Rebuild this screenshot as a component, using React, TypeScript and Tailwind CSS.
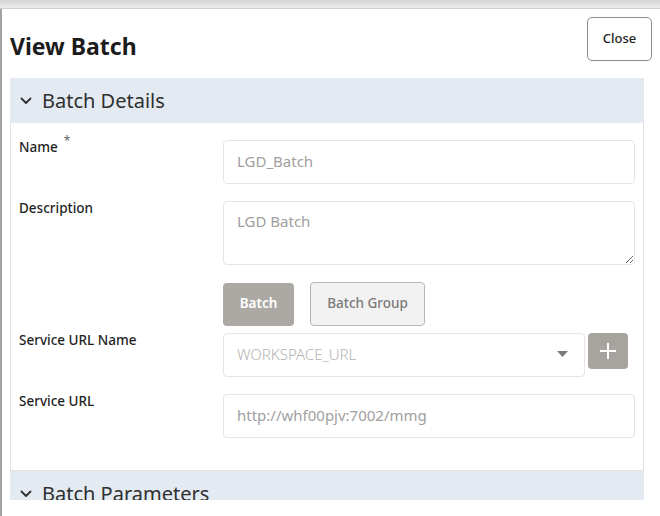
import React from "react"

const Chevron = () => (
  <svg width="12" height="8" viewBox="0 0 12 8" className="shrink-0">
    <polyline points="1.5,1.5 6,6 10.5,1.5" fill="none" stroke="#333" strokeWidth="1.8" strokeLinecap="round" strokeLinejoin="round" />
  </svg>
)

const SectionHeader = ({ title }: { title: string }) => (
  <div className="h-[45px] shrink-0 bg-[#e4eaf1] flex items-center pl-[9px] gap-[10px] border-x border-[#e4eaf1]">
    <Chevron />
    <span className="text-[20px] leading-[24px] text-[#2f2f2f] font-normal">{title}</span>
  </div>
)

const Label = ({ children, required }: { children: React.ReactNode; required?: boolean }) => (
  <div className="text-[13.5px] leading-[14px] font-medium text-[#1f1f1f] flex items-start">
    <span>{children}</span>
    {required && <span className="ml-[6px] -mt-[6px] text-[12px] text-[#666] font-normal">*</span>}
  </div>
)

const fieldCls =
  "w-full h-[44px] rounded-[4px] border border-[#e5e5e5] bg-white px-[13px] pb-[3px] text-[15px] text-[#a0a0a0] outline-none"

export default function App() {
  return (
    <div className="w-[660px] h-[516px] overflow-hidden bg-white font-['Noto_Sans',sans-serif]">
      <div className="h-[9px] bg-gradient-to-b from-[#d4d4d4] to-[#ededed] border-b border-[#cfcfcf]" />
      <div className="h-[507px] border-l-2 border-[#a3a3a3] flex flex-col">
        {/* header */}
        <div className="h-[69px] shrink-0 flex items-start justify-between pl-[8px] pr-[8px]">
          <h1 className="pt-[21px] text-[23px] leading-[32px] font-bold text-[#1c1c1c]">View Batch</h1>
          <button className="mt-[8px] w-[65px] h-[44px] rounded-[5px] border border-[#8c8c8c] bg-white text-[13px] text-[#222] font-medium">
            Close
          </button>
        </div>

        {/* body */}
        <div className="h-[422px] shrink-0 overflow-hidden pl-[8px] pr-[16px] flex flex-col">
          <SectionHeader title="Batch Details" />
          <div className="border-x border-b border-[#e3e3e3] pl-[8px] pr-[8px] pt-[17px] pb-[32px] grid grid-cols-[204px_1fr] items-start">
            <Label required>Name</Label>
            <input readOnly value="LGD_Batch" className={fieldCls} />

            <div className="col-span-2 h-[17px]" />
            <Label>Description</Label>
            <textarea
              readOnly
              defaultValue="LGD Batch"
              className="w-full h-[64px] rounded-[4px] border border-[#e5e5e5] bg-white px-[13px] pt-[8px] text-[15px] leading-[22px] text-[#a0a0a0] outline-none block"
            />

            <div className="col-span-2 h-[17px]" />
            <div />
            <div className="flex items-start gap-[16px]">
              <button className="mt-[1px] w-[71px] h-[43px] rounded-[4px] bg-[#aca8a4] pb-[2px] text-white text-[13.5px] font-semibold">
                Batch
              </button>
              <button className="w-[115px] h-[44px] rounded-[4px] bg-[#f2f2f2] border border-[#b5b5b5] pb-[2px] text-[#7a7a7a] text-[13.5px] font-medium">
                Batch Group
              </button>
            </div>

            <div className="col-span-2 h-[7px]" />
            <Label>Service URL Name</Label>
            <div className="flex items-start gap-[3px]">
              <div className="w-[362px] h-[44px] rounded-[4px] border border-[#e5e5e5] flex items-center justify-between pl-[13px] pr-[16px] pb-[2px]">
                <span className="text-[15px] text-[#b3b3b3] font-light">WORKSPACE_URL</span>
                <svg width="11" height="6" viewBox="0 0 11 6">
                  <polygon points="0,0 11,0 5.5,6" fill="#7a7a7a" />
                </svg>
              </div>
              <button className="w-[40px] h-[36px] rounded-[4px] bg-[#a7a4a0] flex items-center justify-center">
                <svg width="18" height="18" viewBox="0 0 18 18">
                  <path d="M9 1v16M1 9h16" stroke="#fff" strokeWidth="2" />
                </svg>
              </button>
            </div>

            <div className="col-span-2 h-[17px]" />
            <Label>Service URL</Label>
            <input readOnly value="http://whf00pjv:7002/mmg" className={fieldCls} />
          </div>
          <SectionHeader title="Batch Parameters" />
          <div className="flex-1 border-x border-[#e3e3e3]" />
        </div>
        <div className="flex-1" />
      </div>
    </div>
  )
}
